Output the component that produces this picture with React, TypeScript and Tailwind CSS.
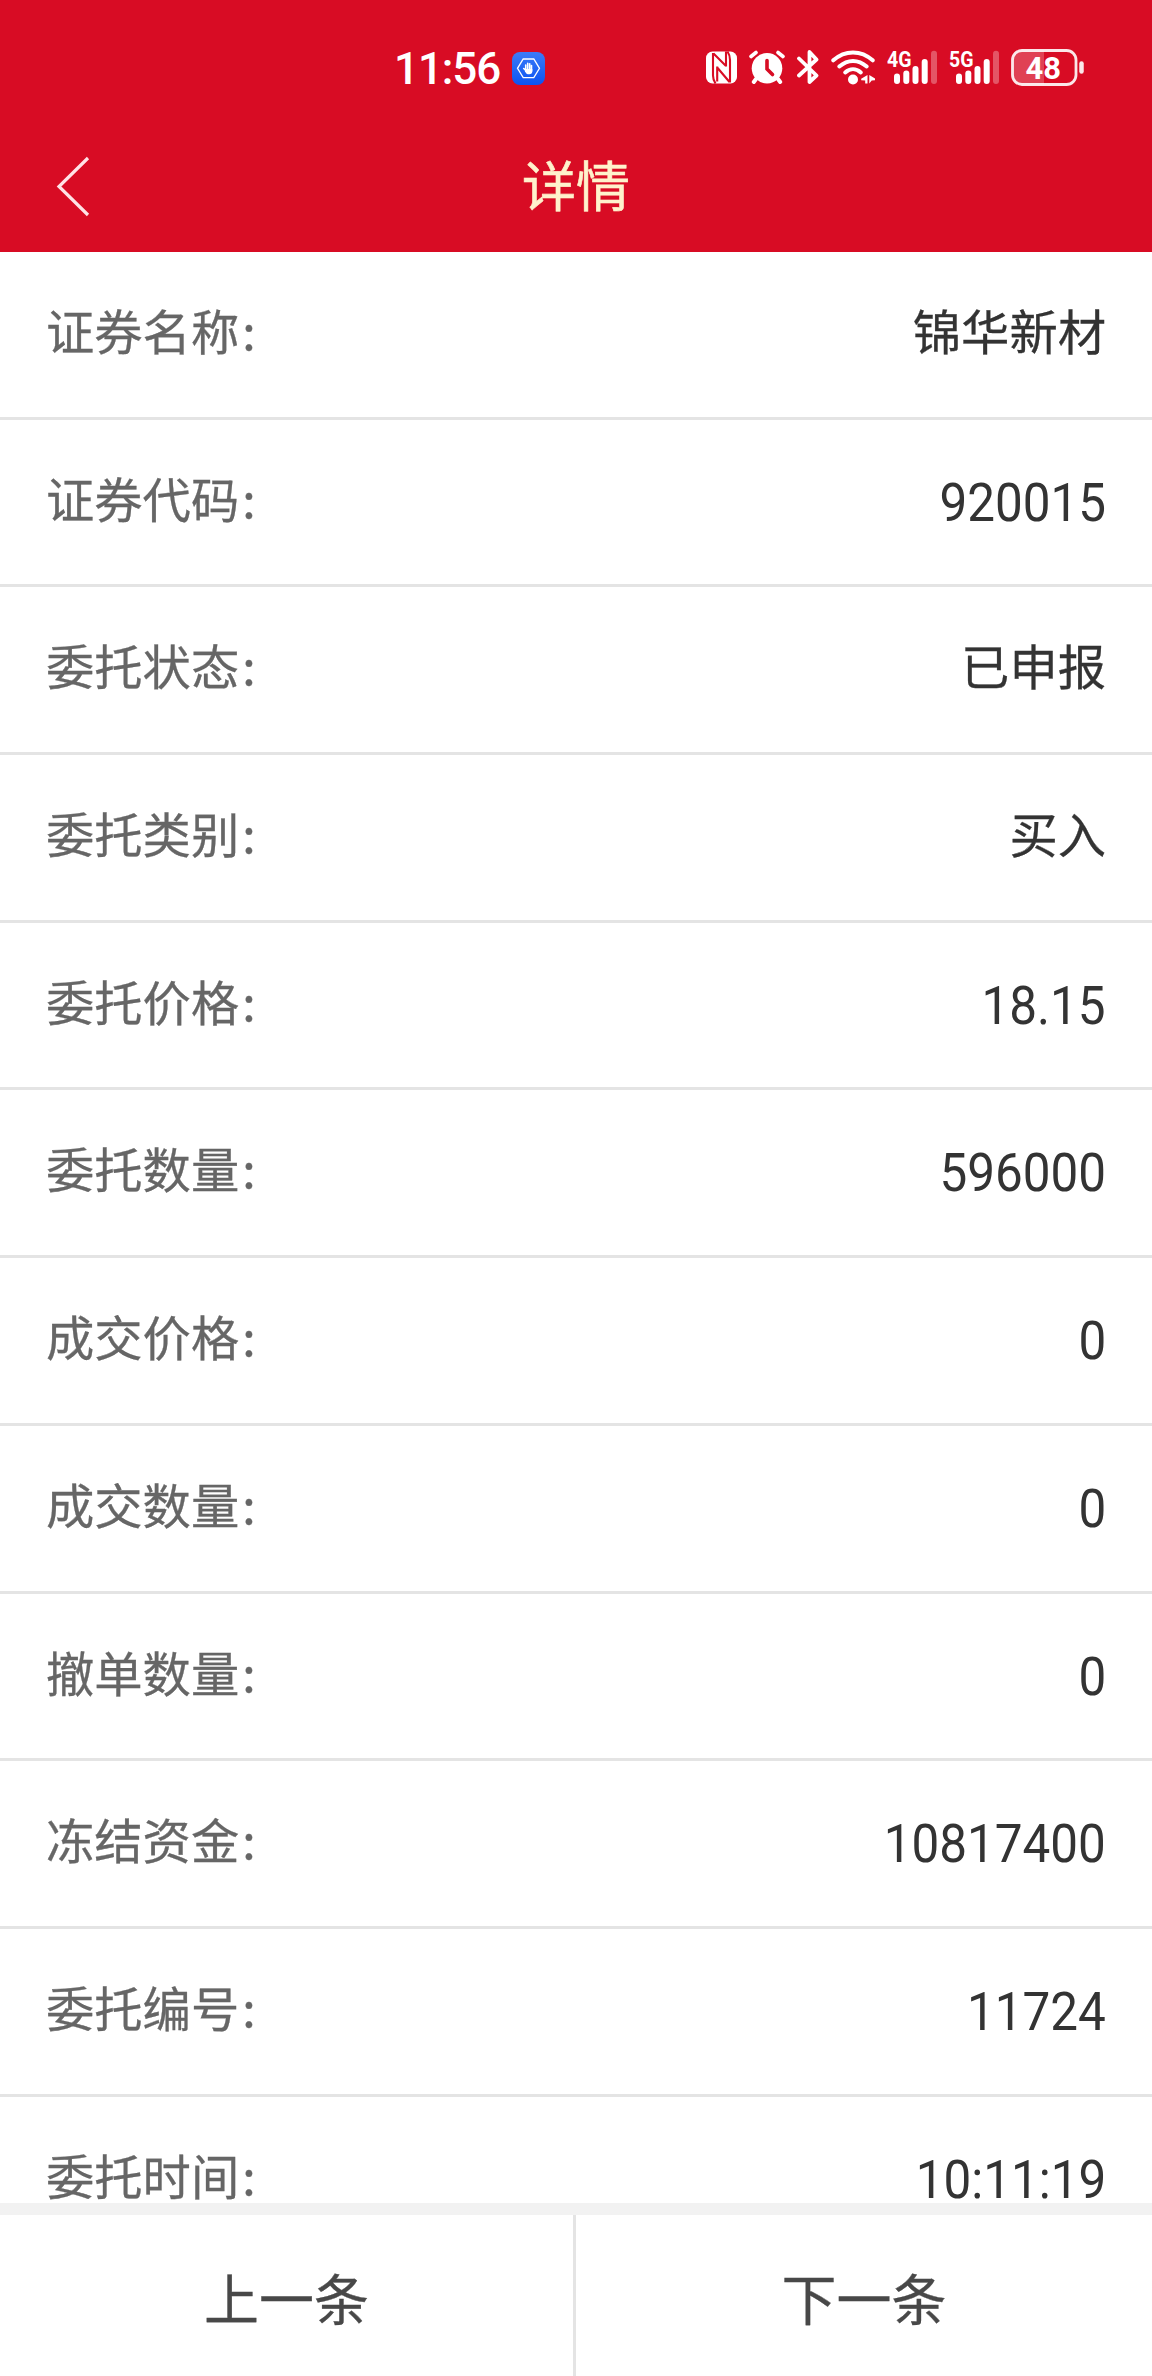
import type { ReactNode } from 'react';

interface DetailItem {
    label: string;
    value: string;
    numeric?: boolean;
}

const items: DetailItem[] = [
    { label: '证券名称', value: '锦华新材' },
    { label: '证券代码', value: '920015', numeric: true },
    { label: '委托状态', value: '已申报' },
    { label: '委托类别', value: '买入' },
    { label: '委托价格', value: '18.15', numeric: true },
    { label: '委托数量', value: '596000', numeric: true },
    { label: '成交价格', value: '0', numeric: true },
    { label: '成交数量', value: '0', numeric: true },
    { label: '撤单数量', value: '0', numeric: true },
    { label: '冻结资金', value: '10817400', numeric: true },
    { label: '委托编号', value: '11724', numeric: true },
    { label: '委托时间', value: '10:11:19', numeric: true },
];

function NfcIcon() {
    return (
        <svg className="h-10 w-[31px]" viewBox="0 0 31 40" fill="none">
            <rect x="0" y="3.5" width="31" height="32" rx="6.5" fill="#fff" />
            <path d="M7 5v22.500c0 3.5.8 5.500 2.500 8M7.500 5.500 20 18M20 18.500V3.500M11.200 33.500V18.500M11.200 19.500 23.500 34M24 34.500V12c0-3.500-.8-6-2.500-8.500" stroke="#d80c24" strokeWidth="2.1" />
        </svg>
    );
}

function AlarmIcon() {
    return (
        <svg className="ml-3 h-10 w-9" viewBox="0 0 36 40" fill="none" stroke="#fff" strokeLinecap="round">
            <circle cx="18" cy="20.3" r="15.3" fill="#fff" stroke="none" />
            <path d="M2 8.5 7 4.5M34 8.5 29 4.5" strokeWidth="3.6" />
            <path d="M7 31 4.8 34M29 31l2.2 3" strokeWidth="4" />
            <path d="M18 12.5v8.5l5.5 5.5" stroke="#d80c24" strokeWidth="3.6" />
        </svg>
    );
}

function BluetoothIcon() {
    return (
        <svg className="ml-3 h-10 w-[22px]" viewBox="0 0 22 40" fill="none" stroke="#fff" strokeWidth="3.8" strokeLinecap="round" strokeLinejoin="round">
            <path d="M2 10.5 19.5 27.5 12.5 34V4L19.5 11.5 2 27.5" />
        </svg>
    );
}

function WifiIcon() {
    return (
        <svg className="ml-3 h-10 w-[45px]" viewBox="0 0 45 40" fill="none" stroke="#fff" strokeWidth="4" strokeLinecap="round">
            <path d="M2.3 12.3C14 1.8 30 1.8 41.7 12.3" />
            <path d="M8.3 18.5C16.8 11 27.2 11 35.7 18.5" />
            <path d="M14.2 24.5C19 20.2 25 20.2 29.8 24.5" />
            <circle cx="22" cy="31.5" r="5" fill="#fff" stroke="none" />
            <path d="M36.5 27v8.500h-2.300v-3l-4-.2v-1.600zM38.300 35.500V27l5.700 3.500v1.700l-3.300.3z" fill="#fff" stroke="none" />
        </svg>
    );
}

function SignalIcon({ network }: { network: string }) {
    return (
        <svg className="h-10 w-[51px]" viewBox="0 0 51 40" fill="#fff">
            <text x="0" y="18.7" className="font-[Roboto,sans-serif] text-[22px] font-bold" textLength="24.5" lengthAdjust="spacingAndGlyphs">
                {network}
            </text>
            <rect x="7" y="25.5" width="6" height="10.5" rx="3" />
            <rect x="16.3" y="22.5" width="6" height="13.5" rx="3" />
            <rect x="25.5" y="18" width="6" height="18" rx="3" />
            <rect x="34.7" y="11" width="6" height="25" rx="3" />
            <rect x="44" y="2.7" width="6" height="33.3" rx="3" fillOpacity="0.3" />
        </svg>
    );
}

function BatteryIcon() {
    return (
        <svg className="ml-[11px] h-10 w-[74px]" viewBox="0 0 74 40" fill="none">
            <path d="M11 2.5H33V36.500H11a9 9 0 0 1-9-9v-16a9 9 0 0 1 9-9z" fill="#fff" fillOpacity="0.22" />
            <rect x="1.5" y="2.5" width="63.5" height="34" rx="9.5" stroke="#fff" strokeOpacity="0.9" strokeWidth="2.8" />
            <path d="M70.5 15.5v8" stroke="#fff" strokeOpacity="0.9" strokeWidth="4.5" strokeLinecap="round" />
            <text x="14.5" y="31.2" className="font-[Roboto,sans-serif] text-[32px] font-bold" fill="#fff" textLength="35.5" lengthAdjust="spacingAndGlyphs">
                48
            </text>
        </svg>
    );
}

function ShieldHandIcon() {
    return (
        <svg className="ml-[11px] h-10 w-[33px]" viewBox="0 0 33 40" fill="none">
            <defs>
                <linearGradient id="badge" x1="0" y1="0" x2="0" y2="1">
                    <stop offset="0" stopColor="#3c7bf8" />
                    <stop offset="1" stopColor="#0b53f2" />
                </linearGradient>
            </defs>
            <rect x="0" y="4" width="33" height="33" rx="8" fill="url(#badge)" />
            <path d="M11.2 11h10.6l5.7 9.3-5.7 9.3H11.2l-5.7-9.3z" stroke="#fff" strokeWidth="1.3" />
            <path d="M13.7 23.5V17M15.7 23V15.3M17.7 23V15.7M19.5 23V17.5M11.7 20.5l2.5 2.5" stroke="#fff" strokeWidth="1.6" strokeLinecap="round" />
            <path d="M13 21h7.3v2.5c0 1.800-1.200 2.800-3 2.800h-1.200c-1.600 0-3.100-1.800-3.100-5.300z" fill="#fff" />
        </svg>
    );
}

function StatusBar() {
    return (
        <div className="flex h-[135px] items-start pt-12 pl-[394px] text-white">
            <div className="flex w-[312px]">
                <span className="w-[107px] font-[Roboto,sans-serif] text-[44px] leading-[42px] font-medium tracking-[-1.1px] whitespace-nowrap">11:56</span>
                <ShieldHandIcon />
            </div>
            <NfcIcon />
            <AlarmIcon />
            <BluetoothIcon />
            <WifiIcon />
            <div className="ml-[11px] flex gap-[11px]">
                <SignalIcon network="4G" />
                <SignalIcon network="5G" />
            </div>
            <BatteryIcon />
        </div>
    );
}

function TitleBar() {
    return (
        <div className="grid h-[117px] grid-cols-3 items-start">
            <button type="button" className="mt-[21px] ml-[55px] w-fit" aria-label="返回">
                <svg className="h-[62px] w-9" viewBox="0 0 36 62" fill="none" stroke="#ffe3e6" strokeWidth="3.2">
                    <path d="M33 2 4 30.500l29 28.500" />
                </svg>
            </button>
            <h1 className="mt-[9px] text-center text-[54px] leading-[80px] text-[#fff2cc] [-webkit-text-stroke:0.6px_#fff2cc]">详情</h1>
        </div>
    );
}

function DetailRow({ label, value, numeric }: DetailItem) {
    return (
        <div className="flex h-[167.7px] shrink-0 items-start justify-between border-b-[3px] border-[#e4e4e4] px-[46px] pt-[42px] text-[48.3px] leading-[70px]">
            <span className="text-[#666] [-webkit-text-stroke:0.3px_#666]">
                {label}
                <span className="ml-[3px]">:</span>
            </span>
            {numeric ? (
                <span className="origin-right scale-x-[0.915] pt-[6px] font-[Roboto,sans-serif] text-[54px] text-[#333]">{value}</span>
            ) : (
                <span className="text-[#333] [-webkit-text-stroke:0.3px_#333]">{value}</span>
            )}
        </div>
    );
}

function PagerButton({ children }: { children: ReactNode }) {
    return (
        <button type="button" className="flex h-full items-start justify-center pt-[41px] text-[55px] leading-[80px] text-[#484848] [-webkit-text-stroke:0.3px_#484848]">
            {children}
        </button>
    );
}

export default function App() {
    return (
        <div className="flex h-[2376px] w-[1152px] flex-col overflow-hidden bg-white font-['Noto_Sans_CJK_SC',sans-serif]">
            <header className="h-[252px] shrink-0 bg-[#d80c24]">
                <StatusBar />
                <TitleBar />
            </header>

            <main className="flex h-[1951px] shrink-0 flex-col overflow-hidden">
                {items.map((item) => (
                    <DetailRow key={item.label} {...item} />
                ))}
            </main>

            <footer className="grid h-[173px] shrink-0 grid-cols-[573px_3px_576px] border-t-[12px] border-[#f2f2f2]">
                <PagerButton>上一条</PagerButton>
                <div className="bg-[#e4e4e4]" />
                <PagerButton>下一条</PagerButton>
            </footer>
        </div>
    );
}
